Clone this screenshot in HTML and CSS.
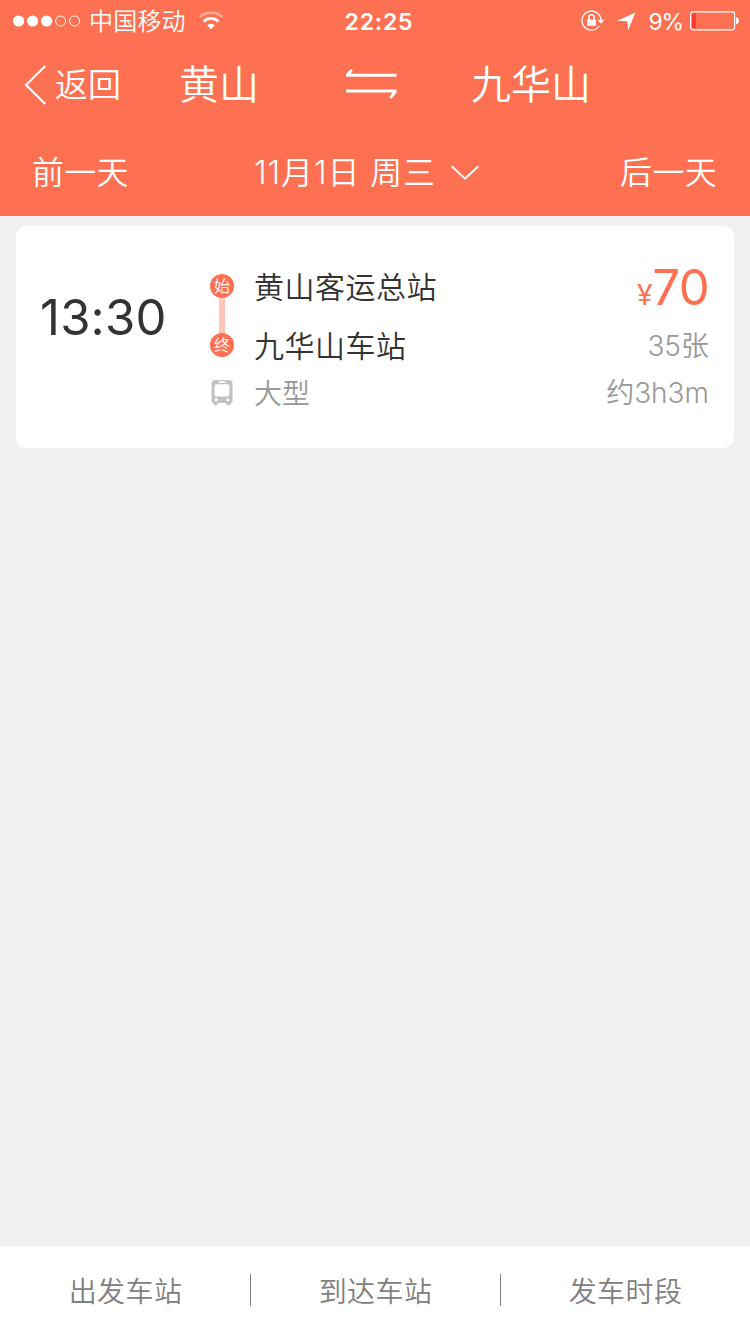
FILE: index.html
```html
<!DOCTYPE html>
<html lang="zh-CN">
<head>
<meta charset="utf-8">
<title>黄山 - 九华山</title>
<link rel="stylesheet" href="styles.css">
</head>
<body>
<div class="app">
  <header class="header">
    <div class="status">
      <div class="status-left">
        <svg class="signal" width="68" height="12" viewBox="0 0 68 12"><g fill="#fff"><circle cx="5.6" cy="6" r="5.6"/><circle cx="19.6" cy="6" r="5.6"/><circle cx="33.6" cy="6" r="5.6"/></g><g fill="none" stroke="#fff"><circle cx="47.6" cy="6" r="5"/><circle cx="61.6" cy="6" r="5"/></g></svg>
        <span class="carrier">中国移动</span>
        <svg class="wifi" width="26" height="20" viewBox="0 0 26 20"><g fill="none" stroke="#fff" stroke-width="2.8"><path d="M1.8 6.1a16 16 0 0 1 22.4 0" opacity=".4"/><path d="M5.6 10.4a10.5 10.5 0 0 1 14.8 0"/></g><path d="M9 14.3a6 6 0 0 1 8 0L13 18.2z" fill="#fff"/></svg>
      </div>
      <span class="clock">22:25</span>
      <div class="status-right">
        <svg class="lock" width="24" height="22" viewBox="0 0 24 22"><path d="M18.300 16A9.500 9.500 0 1 1 20 10.300" fill="none" stroke="#fff" stroke-width="1.300"/><path d="M16.600 9.700h6.800l-3.400 4z" fill="#fff"/><path d="M6.200 9.600h8.600v6.300H6.200z" fill="#fff"/><path d="M7.900 10V7.300a2.600 2.600 0 0 1 5.200 0V10" fill="none" stroke="#fff" stroke-width="1.500"/></svg>
        <svg class="arrow" width="19" height="19" viewBox="0 0 19 19"><path d="M18.400.400L11.200 18.300 10.200 9.300.400 8.700z" fill="#fff"/></svg>
        <span class="percent">9%</span>
        <svg class="battery" width="50" height="20" viewBox="0 0 50 20"><rect x=".6" y=".8" width="44" height="18" rx="2.6" fill="none" stroke="#fff" stroke-width="1.2"/><path d="M3.500 2.300H6v15H3.500Q2 17.300 2 15.800v-12Q2 2.300 3.500 2.300z" fill="#ff3b30"/><path d="M46 6.300c3.800 0 3.800 7 0 7z" fill="#fff"/></svg>
      </div>
    </div>
    <nav class="nav">
      <svg class="back" width="23" height="40" viewBox="0 0 23 40"><path d="M21.300 1L2 20l19.300 19" fill="none" stroke="#fff" stroke-width="2.200"/></svg>
      <span class="back-label">返回</span>
      <span class="city from">黄山</span>
      <svg class="swap" width="51" height="32" viewBox="0 0 51 32"><path d="M0 6L5 .800l1.800 1.800L4.600 5.700H50.500v3H0zM0 21.500h50.500v3.200l-5.200 6-2-1.600 3.200-4.600H0z" fill="#fff"/></svg>
      <span class="city to">九华山</span>
    </nav>
    <div class="dates">
      <span class="day">前一天</span>
      <div class="current"><span class="date">11月1日 周三</span><svg class="chevron" width="28" height="16" viewBox="0 0 28 16"><path d="M.7 1.200L14 13.700 27.300 1.200" fill="none" stroke="#fff" stroke-width="1.900"/></svg></div>
      <span class="day">后一天</span>
    </div>
  </header>
  <main class="list">
    <article class="trip">
      <div class="depart">13:30</div>
      <div class="marks">
        <span class="dot">始</span>
        <span class="line"></span>
        <span class="dot">终</span>
        <svg class="bus" width="22" height="26" viewBox="0 0 22 26"><path fill="#c2c2c2" fill-rule="evenodd" d="M4 0h14Q21.500 0 21.500 4v17q0 2-1.700 2v.8q0 1.200-1.200 1.200H16.500q-1.200 0-1.200-1.200V23H6.700v.8q0 1.200-1.200 1.200H3.400q-1.200 0-1.200-1.200V23Q.5 23 .5 21V4Q.5 0 4 0zM8.500 1.300a.9.900 0 0 0 0 1.800h5a.9.900 0 0 0 0-1.800zM5.500 4.300Q3.600 4.300 3.600 6.200v8.300q0 1.900 1.900 1.900h11q1.900 0 1.900-1.900V6.200q0-1.900-1.900-1.900zM5.200 18.300a1.600 1.600 0 1 0 .01 0zM16.800 18.300a1.600 1.600 0 1 0 .01 0z"/></svg>
      </div>
      <div class="stops">
        <span class="stop">黄山客运总站</span>
        <span class="stop second">九华山车站</span>
        <span class="kind">大型</span>
      </div>
      <div class="facts">
        <span class="price"><span class="yen">¥</span>70</span>
        <span class="left">35张</span>
        <span class="time">约3h3m</span>
      </div>
    </article>
  </main>
  <footer class="filters">
    <span class="filter">出发车站</span>
    <span class="filter">到达车站</span>
    <span class="filter">发车时段</span>
  </footer>
</div>
</body>
</html>
```
FILE: styles.css
```css
* { box-sizing: border-box; }
body {
  margin: 0;
  font-family: Inter, "Noto Sans CJK SC", sans-serif;
  font-weight: 350;
}
svg { display: block; flex: none; }
span { white-space: nowrap; }
.app {
  width: 750px;
  height: 1334px;
  display: flex;
  flex-direction: column;
  background: #f1f1f1;
  overflow: hidden;
}
.header {
  height: 216px;
  background: #fe7052;
  color: #fff;
}
.status {
  height: 40px;
  padding: 1px 10px 0 13px;
  display: grid;
  grid-template-columns: 1fr auto 1fr;
  align-items: center;
}
.status-left, .status-right { display: flex; align-items: center; }
.status-right { justify-content: flex-end; }
.carrier { margin-left: 8px; padding-top: 2px; font-size: 24px; line-height: 38px; letter-spacing: 0.2px; }
.wifi { margin-left: 12px; }
.clock { padding: 1px 0 0 5px; font-size: 23px; font-weight: 600; letter-spacing: 0.8px; line-height: 38px; }
.arrow { margin-left: 12px; }
.percent { margin-left: 13px; padding-top: 2px; font-size: 24px; font-weight: 400; line-height: 38px; letter-spacing: -1.5px; }
.battery { margin-left: 7px; }
.percent { font-size: 23px; letter-spacing: -1.2px; }
.nav {
  height: 88px;
  padding-left: 24px;
  display: flex;
  align-items: center;
}
.back { margin-top: 1px; }
.back-label { width: 132px; padding-left: 8px; font-size: 33px; line-height: 84px; margin-top: 2px; }
.city { padding-top: 2px; font-size: 40px; line-height: 86px; }
.from { width: 167px; }
.to { margin-left: 74px; }
.dates {
  height: 88px;
  padding: 2px 33px 0 32px;
  display: flex;
  align-items: center;
  justify-content: space-between;
  font-size: 32px;
  line-height: 86px;
}
.day { letter-spacing: 0.3px; }
.current { margin-right: 16px; display: flex; align-items: center; }
.date { letter-spacing: 0.9px; }
.chevron { margin-left: 15px; }
.list { flex: 1; padding: 10px 16px; }
.trip {
  height: 222px;
  padding: 30px 25px 0 24px;
  display: flex;
  background: #fff;
  border-radius: 10px;
}
.depart {
  width: 170px;
  font-size: 49px;
  font-weight: 400;
  line-height: 123px;
  letter-spacing: 0.2px;
  color: #333;
}
.marks {
  width: 24px;
  padding-top: 18px;
  display: flex;
  flex-direction: column;
  align-items: center;
}
.dot {
  width: 24px;
  height: 24px;
  border-radius: 50%;
  background: #ff7052;
  color: #fff;
  font-size: 16px;
  line-height: 24px;
  text-align: center;
}
.line { width: 6px; height: 35px; background: #ffc5b9; }
.bus { margin-top: 23px; }
.stops {
  flex: 1;
  padding-left: 20px;
  display: flex;
  flex-direction: column;
  color: #333;
}
.stop { font-size: 30px; line-height: 62px; letter-spacing: 0.5px; }
.second { line-height: 56px; }
.kind { padding-top: 2px; font-size: 28px; line-height: 36px; color: #999; }
.facts {
  display: flex;
  flex-direction: column;
  align-items: flex-end;
  font-size: 28px;
  color: #999;
}
.price { height: 62px; font-size: 49px; font-weight: 400; line-height: 64px; letter-spacing: -0.6px; color: #ff7052; }
.yen { font-size: 28px; line-height: 1; letter-spacing: 0; }
.left { line-height: 56px; }
.time { padding-top: 1px; line-height: 36px; }
.filters {
  height: 89px;
  border-top: 1px solid #e8e8e8;
  background: #fff;
  display: grid;
  grid-template-columns: repeat(3, 250px);
  align-items: center;
}
.filter {
  height: 32px;
  padding-left: 1px;
  text-align: center;
  font-size: 28px;
  line-height: 36px;
  letter-spacing: 0.4px;
  color: #808080;
}
.filter + .filter { padding-left: 0; border-left: 1px solid #808080; }
```
